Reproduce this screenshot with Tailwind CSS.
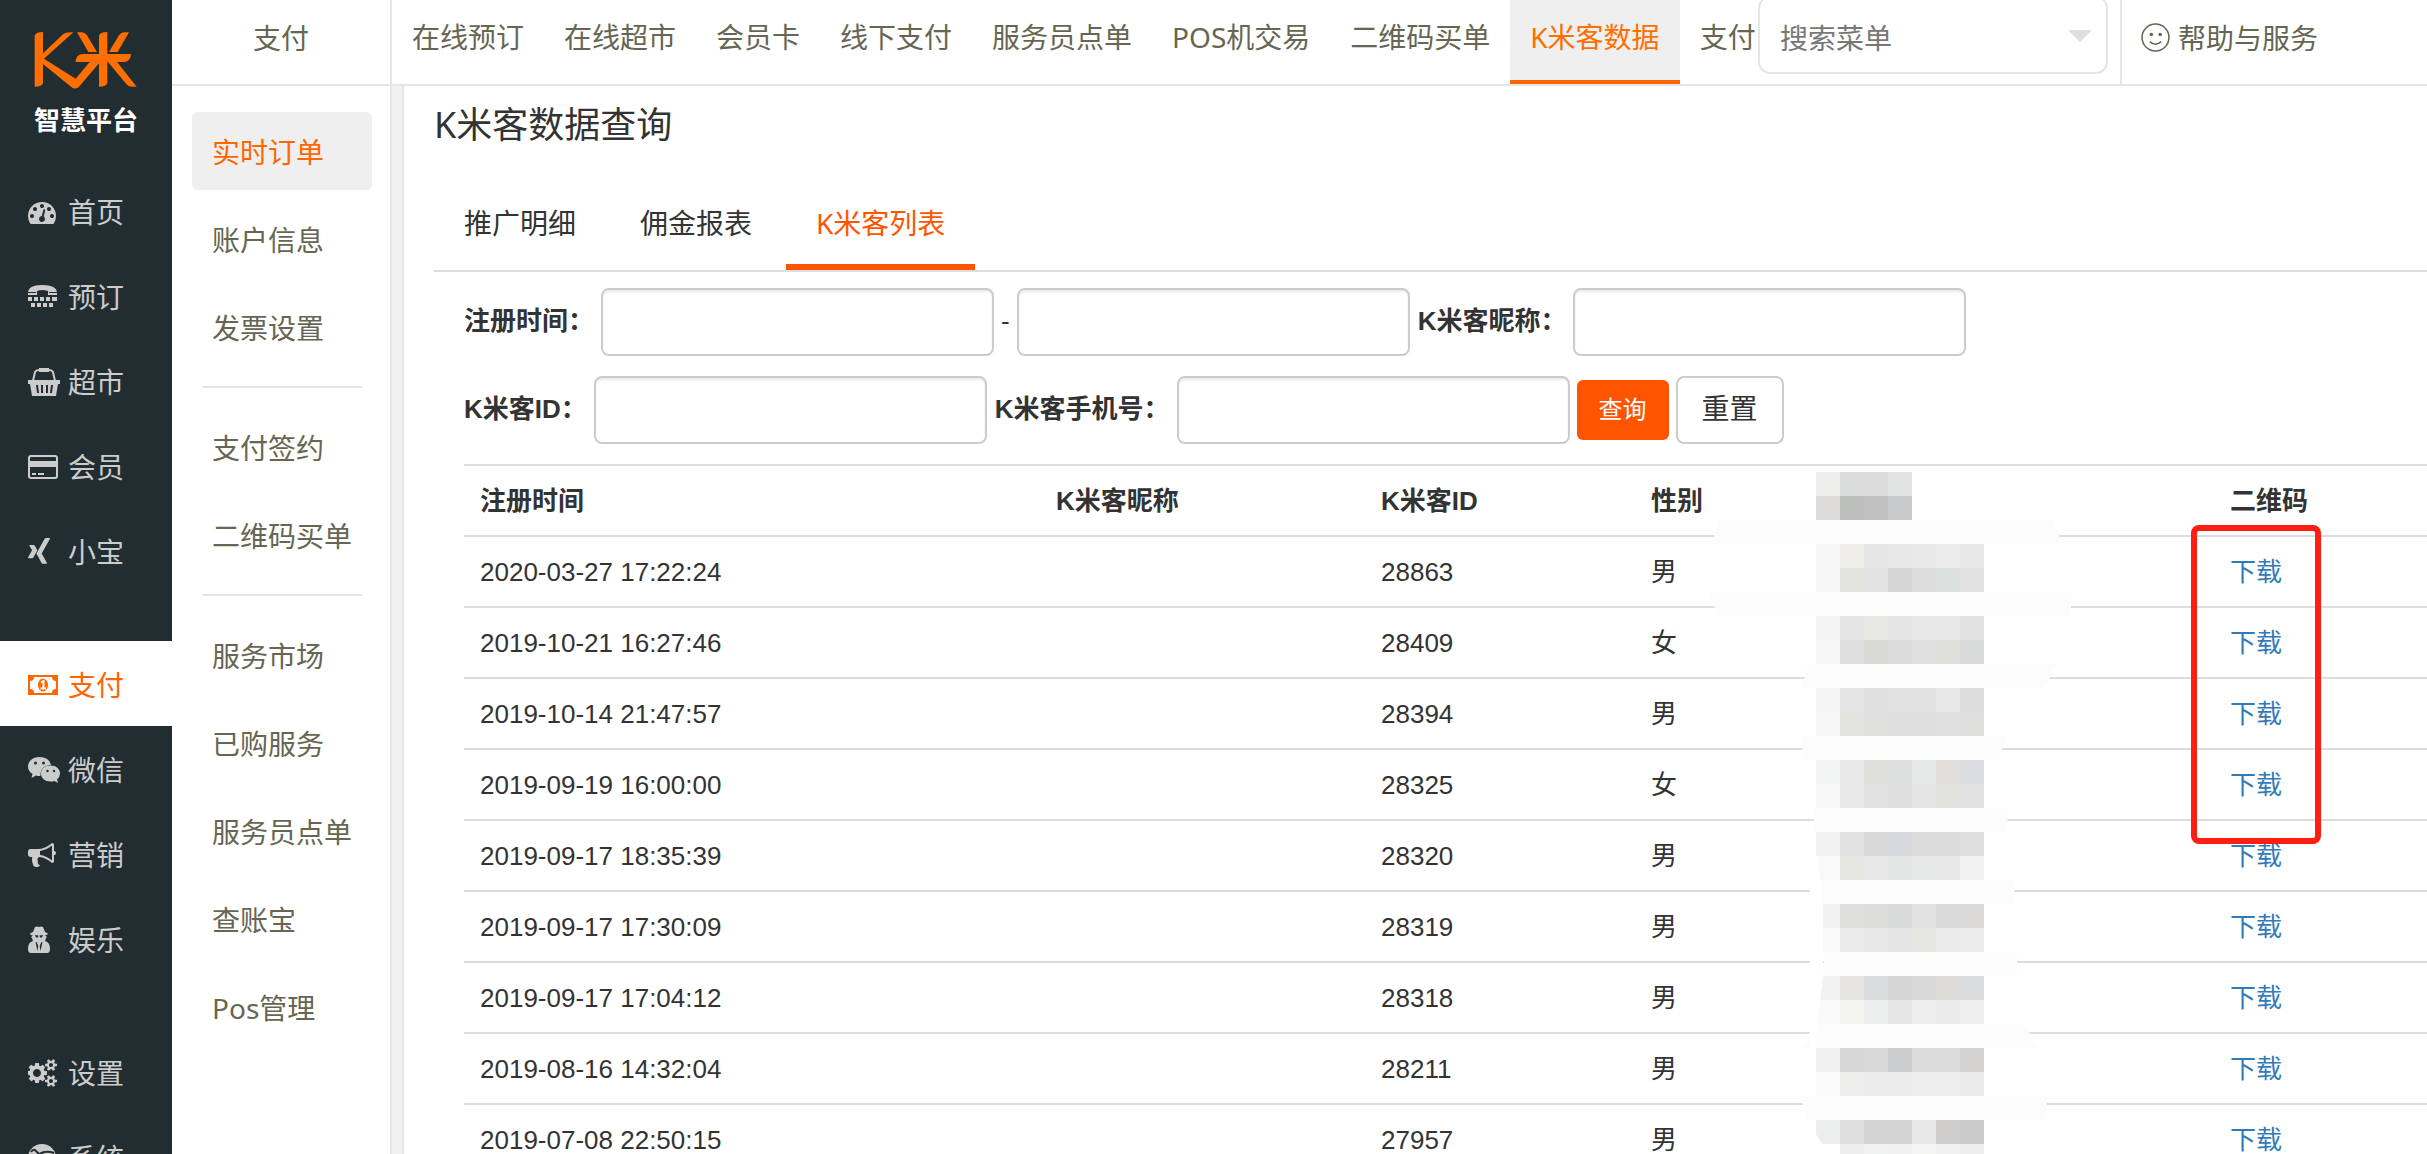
<!DOCTYPE html>
<html lang="zh-CN">
<head>
<meta charset="utf-8">
<title>K米客数据查询</title>
<script src="https://cdn.jsdelivr.net/npm/@tailwindcss/browser@4"></script>
</head>
<body class="flex h-screen overflow-hidden bg-white font-['Noto_Sans','Noto_Sans_CJK_SC',sans-serif] text-[28px] leading-[40px] text-[#333]">

<aside class="flex w-[172px] shrink-0 flex-col bg-[#222d32] text-[#ccc]">
  <a href="#" class="flex h-[168px] shrink-0 flex-col items-center pt-[30px]">
    <svg class="h-[60px] w-[104px]" viewBox="103 90 312 180" fill="#ff6f00" role="img" aria-label="K米">
      <path d="M105 108Q107 96 130 96V160L190 103Q197 96 221 97L133 176L228 236L270 186H228Q229 162 250 162H298V108Q300 96 323 96V162H394Q392 186 372 186H352L411 260H396Q386 260 380 252L323 184V248Q321 260 298 260V190L240 258Q228 272 214 260L130 192V248Q128 260 105 260Z"/>
      <path d="M232 97H246Q256 97 262 106L292 156H266Z"/>
      <path d="M388 97H374Q364 97 358 106L328 156H354Z"/>
    </svg>
    <span class="mt-[6px] text-[26px] leading-[48px] font-bold text-white">智慧平台</span>
  </a>
  <nav class="flex flex-col gap-12">
    <div>
      <a href="#" class="flex h-[85px] items-center pt-[2px] pl-[28px]"><span class="w-[40px]"><svg class="size-[28px]" viewBox="0 0 1792 1792" fill="currentColor"><path d="M384 1152q0-53-37.5-90.5t-90.5-37.5-90.5 37.5-37.5 90.5 37.5 90.5 90.5 37.5 90.5-37.5 37.5-90.5zm192-448q0-53-37.5-90.5t-90.5-37.5-90.5 37.5-37.5 90.5 37.5 90.5 90.5 37.5 90.5-37.5 37.5-90.5zm428 481l101-382q6-26-7.5-48.5t-38.5-29.5-48 6.5-30 39.5l-101 382q-60 5-107 43.5t-63 98.5q-20 77 20 146t117 89 146-20 89-117q16-60-6-117t-72-91zm660-33q0-53-37.5-90.5t-90.5-37.5-90.5 37.5-37.5 90.5 37.5 90.5 90.5 37.5 90.5-37.5 37.5-90.5zm-640-640q0-53-37.5-90.5t-90.5-37.5-90.5 37.5-37.5 90.5 37.5 90.5 90.5 37.5 90.5-37.5 37.5-90.5zm448 192q0-53-37.5-90.5t-90.5-37.5-90.5 37.5-37.5 90.5 37.5 90.5 90.5 37.5 90.5-37.5 37.5-90.5zm320 448q0 261-141 483-19 29-54 29h-1402q-35 0-54-29-141-221-141-483 0-182 71-348t191-286 286-191 348-71 348 71 286 191 191 286 71 348z"/></svg></span>首页</a>
      <a href="#" class="flex h-[85px] items-center pt-[2px] pl-[28px]"><span class="w-[40px]"><svg class="h-[28px] w-[32px]" viewBox="0 0 32 28" fill="currentColor"><path d="M0 10Q0 2 14 2Q29 2 29 10V12H20V8Q14 6 9 8V12H0ZM0 14h4v4h-4zM6 14h4v4h-4zM12 14h4v4h-4zM18 14h4v4h-4zM24 14h5v4h-5zM3 20h4v4h-4zM9 20h4v4h-4zM15 20h4v4h-4zM21 20h4v4h-4z"/><path d="M0 9.500H8M21 9.500H29" stroke="#222d32"/></svg></span>预订</a>
      <a href="#" class="flex h-[85px] items-center pt-[2px] pl-[28px]"><span class="w-[40px]"><svg class="h-[28px] w-[32px]" viewBox="0 0 32 28" fill="currentColor"><path d="M0 12h32v4h-2l-2 12H4L2 16H0Z"/><path d="M5 13L7 4Q8 2 11 2H21Q24 2 25 4L27 13" fill="none" stroke="currentColor" stroke-width="2"/><path d="M11 0h10v4H11z"/><path d="M9 17l1 8M14 17v8M19 17v8M24 17l-1 8" stroke="#222d32" stroke-width="2"/></svg></span>超市</a>
      <a href="#" class="flex h-[85px] items-center pt-[2px] pl-[28px]"><span class="w-[40px]"><svg class="h-[28px] w-[32px]" viewBox="0 0 32 28" fill="currentColor"><rect x="1" y="3" width="28" height="22" rx="2" fill="none" stroke="currentColor" stroke-width="2"/><path d="M1 8h28v6H1zM4 20h4v2h-4zM10 20h6v2h-6z"/></svg></span>会员</a>
      <a href="#" class="flex h-[85px] items-center pt-[2px] pl-[28px]"><span class="w-[40px]"><svg class="size-[28px]" viewBox="190 0 1792 1792" fill="currentColor"><path d="M789 786q-10 18-257 456-27 46-65 46h-239q-21 0-31-17t0-36l253-448q1 0 0-1l-161-279q-12-22-1-37 9-15 32-15h239q40 0 66 45zm806-771q11 16 0 37l-528 934v1l336 615q11 20 1 37-10 15-32 15h-239q-42 0-66-45l-339-622q18-32 531-942 25-45 64-45h241q22 0 31 15z"/></svg></span>小宝</a>
    </div>
    <div>
      <a href="#" aria-current="page" class="flex h-[85px] items-center bg-white pt-[2px] pl-[28px] text-[#ff6600]"><span class="w-[40px]"><svg class="h-[28px] w-[32px]" viewBox="0 0 32 28" fill="currentColor"><path fill-rule="evenodd" d="M0 4h30v20H0zM6 6Q6 10 2 10V18Q6 18 6 22H24Q24 18 28 18V10Q24 10 24 6Z"/><ellipse cx="15" cy="14" rx="5" ry="6.500"/><path d="M13 11.500L15.500 10V17M12.500 17.500H18" fill="none" stroke="#fff" stroke-width="2"/></svg></span>支付</a>
      <a href="#" class="flex h-[85px] items-center pt-[2px] pl-[28px]"><span class="w-[40px]"><svg class="h-[28px] w-[33px]" viewBox="0 0 33 28" fill="currentColor"><path d="M11.500 1C5 1 0 5 0 10.500Q0 15 4.500 18L3.500 22L8 19.500Q10 20 12.500 20C12 13 17 9 23 9Q21 1 11.500 1Z"/><path d="M22.500 9.500C17 9.500 13 13 13 17.500S17 25.500 22.500 25.500Q25 25.500 26.500 25L30 27L29 23.500Q32 21 32 17.500C32 13 28 9.500 22.500 9.500Z"/><g fill="#222d32"><circle cx="7.500" cy="7" r="1.500"/><circle cx="15.500" cy="7" r="1.500"/><circle cx="19.500" cy="15" r="1.200"/><circle cx="26" cy="15" r="1.200"/></g></svg></span>微信</a>
      <a href="#" class="flex h-[85px] items-center pt-[2px] pl-[28px]"><span class="w-[40px]"><svg class="size-[28px]" viewBox="0 0 1792 1792" fill="currentColor"><path d="M1664 640q53 0 90.5 37.5t37.5 90.5-37.5 90.5-90.5 37.5v384q0 52-38 90t-90 38q-417-347-812-380-58 19-91 66t-31 100.500 40 92.500q-20 33-23 65.500t6 58 33.500 55 48 50 61.500 50.500q-29 58-111.500 83t-168.500 11.500-132-55.500q-7-23-29.500-87.500t-32-94.500-23-89-15-101 3.500-98.500 22-110.500h-122q-66 0-113-47t-47-113v-192q0-66 47-113t113-47h480q435 0 896-384 52 0 90 38t38 90v384zm-128 604v-954q-394 302-768 343v270q377 42 768 341z"/></svg></span>营销</a>
      <a href="#" class="flex h-[85px] items-center pt-[2px] pl-[28px]"><span class="w-[40px]"><svg class="h-[28px] w-[24px]" viewBox="0 0 24 28" fill="currentColor"><path d="M7 1Q9 0 11 1Q13 0 15 1L17 6Q20 7 20 8Q18 9 17 9.500L19 11L18 12L17 15Q22 16 22 23Q22 27 19 27H3Q0 27 0 23Q0 16 5 15L4 12L3 11L5 9.500Q2 9 2 8Q2 7 5 6Z"/><path d="M7 9L10.500 9.500L10 11.500H8ZM15 9L11.500 9.500L12 11.500H14ZM7.500 16L9.500 25L10.300 20L8.500 16ZM14.500 16L12.500 25L11.700 20L13.500 16Z" fill="#222d32"/></svg></span>娱乐</a>
    </div>
    <div>
      <a href="#" class="flex h-[85px] items-center pt-[2px] pl-[28px]"><span class="w-[40px]"><svg class="h-[28px] w-[30px]" viewBox="0 0 1920 1792" fill="currentColor"><path d="M832 896q0-106-75-181t-181-75-181 75-75 181 75 181 181 75 181-75 75-181zm768 512q0-52-38-90t-90-38-90 38-38 90q0 53 37.500 90.500t90.500 37.500 90.500-37.500 37.500-90.500zm0-1024q0-52-38-90t-90-38-90 38-38 90q0 53 37.500 90.500t90.500 37.500 90.500-37.500 37.500-90.500zm-384 421v185q0 10-7 19.500t-16 10.500l-155 24q-11 35-32 76 34 48 90 115 7 11 7 20 0 12-7 19-23 30-82.500 89.500t-78.500 59.500q-11 0-21-7l-115-90q-37 19-77 31-11 108-23 155-7 24-30 24h-186q-11 0-20-7.500t-10-17.500l-23-153q-34-10-75-31l-118 89q-7 7-20 7-11 0-21-8-144-133-144-160 0-9 7-19 10-14 41-53t47-61q-23-44-35-82l-152-24q-10-1-17-9.500t-7-19.500v-185q0-10 7-19.500t16-10.500l155-24q11-35 32-76-34-48-90-115-7-11-7-20 0-12 7-20 22-30 82-89t79-59q11 0 21 7l115 90q34-18 77-32 11-108 23-154 7-24 30-24h186q11 0 20 7.500t10 17.500l23 153q34 10 75 31l118-89q8-7 20-7 11 0 21 8 144 133 144 160 0 8-7 19-12 16-42 54t-45 60q23 48 34 82l152 23q10 2 17 10.500t7 19.500zm640 533v140q0 16-149 31-12 27-30 52 51 113 51 138 0 4-4 7-122 71-124 71-8 0-46-47t-52-68q-20 2-30 2t-30-2q-14 21-52 68t-46 47q-2 0-124-71-4-3-4-7 0-25 51-138-18-25-30-52-149-15-149-31v-140q0-16 149-31 13-29 30-52-51-113-51-138 0-4 4-7 4-2 35-20t59-34 30-16q8 0 46 46.500t52 67.500q20-2 30-2t30 2q51-71 92-112l6-2q4 0 124 70 4 3 4 7 0 25-51 138 17 23 30 52 149 15 149 31zm0-1024v140q0 16-149 31-12 27-30 52 51 113 51 138 0 4-4 7-122 71-124 71-8 0-46-47t-52-68q-20 2-30 2t-30-2q-14 21-52 68t-46 47q-2 0-124-71-4-3-4-7 0-25 51-138-18-25-30-52-149-15-149-31v-140q0-16 149-31 13-29 30-52-51-113-51-138 0-4 4-7 4-2 35-20t59-34 30-16q8 0 46 46.500t52 67.500q20-2 30-2t30 2q51-71 92-112l6-2q4 0 124 70 4 3 4 7 0 25-51 138 17 23 30 52 149 15 149 31z"/></svg></span>设置</a>
      <a href="#" class="flex h-[85px] items-center pt-[2px] pl-[28px]"><span class="w-[40px]"><svg class="size-[28px]" viewBox="0 0 28 28" fill="currentColor"><circle cx="14" cy="14" r="14"/><path d="M3 8Q5 5 7 6L11 10Q18 6 26 9M8 14Q14 8 21 13" fill="none" stroke="#222d32" stroke-width="2"/></svg></span>系统</a>
    </div>
  </nav>
</aside>

<aside class="flex w-[220px] shrink-0 flex-col border-r-2 border-[#e5e5e5] text-[#666652]">
  <div class="h-[86px] shrink-0 border-b-2 border-[#e5e5e5] pt-[18px] text-center">支付</div>
  <nav class="flex flex-col pt-[26px] pr-[18px] pl-[20px]">
    <div class="flex flex-col gap-[10px]">
      <a href="#" aria-current="page" class="flex h-[78px] items-center rounded-md bg-[#efefef] pt-[2px] pl-[20px] text-[#ff6600]">实时订单</a>
      <a href="#" class="flex h-[78px] items-center pt-[2px] pl-[20px]">账户信息</a>
      <a href="#" class="flex h-[78px] items-center pt-[2px] pl-[20px]">发票设置</a>
    </div>
    <hr class="mx-[10px] my-[20px] border-t-2 border-[#e5e5e5]">
    <div class="flex flex-col gap-[10px]">
      <a href="#" class="flex h-[78px] items-center pt-[2px] pl-[20px]">支付签约</a>
      <a href="#" class="flex h-[78px] items-center pt-[2px] pl-[20px]">二维码买单</a>
    </div>
    <hr class="mx-[10px] my-[20px] border-t-2 border-[#e5e5e5]">
    <div class="flex flex-col gap-[10px]">
      <a href="#" class="flex h-[78px] items-center pt-[2px] pl-[20px]">服务市场</a>
      <a href="#" class="flex h-[78px] items-center pt-[2px] pl-[20px]">已购服务</a>
      <a href="#" class="flex h-[78px] items-center pt-[2px] pl-[20px]">服务员点单</a>
      <a href="#" class="flex h-[78px] items-center pt-[2px] pl-[20px]">查账宝</a>
      <a href="#" class="flex h-[78px] items-center pt-[2px] pl-[20px]">Pos管理</a>
    </div>
  </nav>
</aside>

<div class="flex min-w-0 flex-1 flex-col">
  <header class="flex h-[86px] shrink-0 border-b-2 border-[#e5e5e5] whitespace-nowrap text-[#666652]">
    <nav class="flex min-w-0 flex-1 overflow-hidden">
      <a href="#" class="px-[20px] pt-[17px]">在线预订</a>
      <a href="#" class="px-[20px] pt-[17px]">在线超市</a>
      <a href="#" class="px-[20px] pt-[17px]">会员卡</a>
      <a href="#" class="px-[20px] pt-[17px]">线下支付</a>
      <a href="#" class="px-[20px] pt-[17px]">服务员点单</a>
      <a href="#" class="px-[20px] pt-[17px]">POS机交易</a>
      <a href="#" class="px-[20px] pt-[17px]">二维码买单</a>
      <a href="#" aria-current="page" class="border-b-4 border-[#ff6600] bg-[#efefef] px-[20px] pt-[17px] text-[#ff6f00]">K米客数据</a>
      <a href="#" class="pt-[17px] pl-[20px]">支付</a>
    </nav>
    <div class="relative -mt-[4px] mr-[12px] h-[78px] w-[350px] shrink-0">
      <input type="text" aria-label="搜索菜单" placeholder="搜索菜单" class="h-full w-full rounded-xl border-2 border-[#e5e5e5] bg-white px-[20px] pt-[6px] text-[28px] placeholder:text-[#777]">
      <svg class="absolute top-[34px] right-[16px] h-[12px] w-[24px]" viewBox="0 0 24 12" fill="#dedede"><path d="M0 0H24L12 12Z"/></svg>
    </div>
    <a href="#" class="flex w-[307px] shrink-0 gap-[8px] border-l-2 border-[#e5e5e5] pt-[18px] pl-[19px]">
      <svg class="mt-[5px] h-[29px] w-[29px]" viewBox="0 0 28 28" fill="none" stroke="currentColor" stroke-width="1.500"><circle cx="14" cy="14" r="13"/><path d="M8.500 18Q14 23 19.500 18"/><g fill="currentColor" stroke="none"><circle cx="10" cy="11" r="1.700"/><circle cx="18.500" cy="11" r="1.700"/></g></svg>
      帮助与服务
    </a>
  </header>

  <div class="flex min-h-0 flex-1">
    <div class="w-[12px] shrink-0 border-r-2 border-[#e5e5e5] bg-[#f0f0f0]"></div>
    <main class="min-w-0 flex-1 overflow-hidden pl-[30px]">
      <h1 class="pt-[13px] text-[36px] leading-[52px]">K米客数据查询</h1>
      <div class="mt-[27px] flex h-[94px] gap-1 border-b-2 border-[#ddd]">
        <a href="#" class="px-[30px] pt-[25px]">推广明细</a>
        <a href="#" class="px-[30px] pt-[25px]">佣金报表</a>
        <a href="#" aria-current="page" class="border-b-6 border-[#ff5500] px-[30px] pt-[25px] text-[#ff5500]">K米客列表</a>
      </div>

      <div class="relative pl-[30px] font-['Liberation_Sans','Noto_Sans_CJK_SC',sans-serif] text-[26px]">
        <form class="flex flex-col gap-[20px] pt-[16px]">
          <div class="flex items-center gap-[7px]">
            <label for="from" class="pb-[2px] font-bold">注册时间：</label>
            <input id="from" type="text" class="h-[68px] w-[393px] rounded-lg border-2 border-[#ccc] px-3 shadow-[inset_0_2px_2px_rgba(0,0,0,0.08)]">
            <span class="pb-[2px]">-</span>
            <input type="text" aria-label="注册时间止" class="h-[68px] w-[393px] rounded-lg border-2 border-[#ccc] px-3 shadow-[inset_0_2px_2px_rgba(0,0,0,0.08)]">
            <label for="nick" class="pb-[2px] pl-px font-bold">K米客昵称：</label>
            <input id="nick" type="text" class="h-[68px] w-[393px] rounded-lg border-2 border-[#ccc] px-3 shadow-[inset_0_2px_2px_rgba(0,0,0,0.08)]">
          </div>
          <div class="flex items-center gap-[7px]">
            <label for="kid" class="pb-[2px] font-bold">K米客ID：</label>
            <input id="kid" type="text" class="h-[68px] w-[393px] rounded-lg border-2 border-[#ccc] px-3 shadow-[inset_0_2px_2px_rgba(0,0,0,0.08)]">
            <label for="phone" class="pb-[2px] pl-px font-bold">K米客手机号：</label>
            <input id="phone" type="text" class="h-[68px] w-[393px] rounded-lg border-2 border-[#ccc] px-3 shadow-[inset_0_2px_2px_rgba(0,0,0,0.08)]">
            <button type="submit" class="h-[60px] w-[92px] rounded-md bg-[#ff5500] text-[24px] text-white">查询</button>
            <button type="reset" class="h-[68px] w-[108px] rounded-lg border-2 border-[#ccc] text-[28px]">重置</button>
          </div>
        </form>

        <table class="mt-[20px] w-full table-fixed border-collapse text-left">
          <colgroup><col class="w-[576px]"><col class="w-[325px]"><col class="w-[270px]"><col class="w-[165px]"><col class="w-[414px]"><col></colgroup>
          <thead>
            <tr class="h-[71px] border-t-2 border-[#ddd]"><th class="pl-[16px]">注册时间</th><th class="pl-[16px]">K米客昵称</th><th class="pl-[16px]">K米客ID</th><th class="pl-[16px]">性别</th><th></th><th class="pl-[16px]">二维码</th></tr>
          </thead>
          <tbody>
            <tr class="h-[71px] border-t-2 border-[#ddd]"><td class="pl-[16px]">2020-03-27 17:22:24</td><td></td><td class="pl-[16px]">28863</td><td class="pl-[16px]">男</td><td></td><td class="pl-[16px]"><a href="#" class="text-[#337ab7]">下载</a></td></tr>
            <tr class="h-[71px] border-t-2 border-[#ddd]"><td class="pl-[16px]">2019-10-21 16:27:46</td><td></td><td class="pl-[16px]">28409</td><td class="pl-[16px]">女</td><td></td><td class="pl-[16px]"><a href="#" class="text-[#337ab7]">下载</a></td></tr>
            <tr class="h-[71px] border-t-2 border-[#ddd]"><td class="pl-[16px]">2019-10-14 21:47:57</td><td></td><td class="pl-[16px]">28394</td><td class="pl-[16px]">男</td><td></td><td class="pl-[16px]"><a href="#" class="text-[#337ab7]">下载</a></td></tr>
            <tr class="h-[71px] border-t-2 border-[#ddd]"><td class="pl-[16px]">2019-09-19 16:00:00</td><td></td><td class="pl-[16px]">28325</td><td class="pl-[16px]">女</td><td></td><td class="pl-[16px]"><a href="#" class="text-[#337ab7]">下载</a></td></tr>
            <tr class="h-[71px] border-t-2 border-[#ddd]"><td class="pl-[16px]">2019-09-17 18:35:39</td><td></td><td class="pl-[16px]">28320</td><td class="pl-[16px]">男</td><td></td><td class="pl-[16px]"><a href="#" class="text-[#337ab7]">下载</a></td></tr>
            <tr class="h-[71px] border-t-2 border-[#ddd]"><td class="pl-[16px]">2019-09-17 17:30:09</td><td></td><td class="pl-[16px]">28319</td><td class="pl-[16px]">男</td><td></td><td class="pl-[16px]"><a href="#" class="text-[#337ab7]">下载</a></td></tr>
            <tr class="h-[71px] border-t-2 border-[#ddd]"><td class="pl-[16px]">2019-09-17 17:04:12</td><td></td><td class="pl-[16px]">28318</td><td class="pl-[16px]">男</td><td></td><td class="pl-[16px]"><a href="#" class="text-[#337ab7]">下载</a></td></tr>
            <tr class="h-[71px] border-t-2 border-[#ddd]"><td class="pl-[16px]">2019-08-16 14:32:04</td><td></td><td class="pl-[16px]">28211</td><td class="pl-[16px]">男</td><td></td><td class="pl-[16px]"><a href="#" class="text-[#337ab7]">下载</a></td></tr>
            <tr class="h-[71px] border-t-2 border-[#ddd]"><td class="pl-[16px]">2019-07-08 22:50:15</td><td></td><td class="pl-[16px]">27957</td><td class="pl-[16px]">男</td><td></td><td class="pl-[16px]"><a href="#" class="text-[#337ab7]">下载</a></td></tr>
          </tbody>
        </table>

        <!-- Pixelated cover over the phone-number column -->
        <svg id="mask" class="pointer-events-none absolute top-[200px] left-[1266px] h-[696px] w-[380px]" viewBox="0 0 380 696" shape-rendering="crispEdges" aria-hidden="true"></svg>
        <!-- Highlight round the download links -->
        <div class="pointer-events-none absolute top-[253px] left-[1757px] h-[319px] w-[130px] rounded-lg border-6 border-[#ff1f12]"></div>
      </div>
    </main>
  </div>
</div>

<script>
const cell = 24, startX = 116;
const blocks = [
  ['eeeeec dadcdb dbdbdb e1e4e2', 'dddcdb bdbfbd c1c1c1 c8c9cb'],
  ['f6f6f6 efeeeb e6e6e6 e7e7e7 e9e9e9 ececec e8e8e8', 'f6f6f6 e3e3e0 e3e3e3 d6d6d6 dddddd dce0de e1e1e1'],
  ['f4f4f4 e5e5e5 e7e7e4 e4e4e4 e7e7e7 e7e7e7 e2e2e2', 'f6f6f6 dfdfdf d9d9d6 dbdbdb e0e0e0 dededb d8dbd9'],
  ['f5f5f5 e5e5e5 e0e0e0 e1e1e1 e2e2e2 e8e8e8 dddddd', 'f7f7f7 e3e3e0 e0e0de dedede dfdfdf e0e0e0 dededc'],
  ['f2f4f3 e9e9e9 dededb dcdfdd e4e8e6 e1dedc dcdde0', 'f8f8f8 e9e9e9 e1e1e1 dedede e4e4e4 e2e2df e2e2e2'],
  ['f2f2f2 e2e2e2 d8d8d9 d8d9dc dcdcdc dcdcdc dedede', 'f9f9f9 e6e6e3 e7e7e7 e2e5e3 e6e9e7 e8e8e8 f2f2f2'],
  ['f2f2f2 dededc dddddb d8dbd9 e1e1e1 dadada dbdad8', 'f9f9f9 ebebeb e8e8e8 e5e5e5 e6e6e3 ebebeb ececec'],
  ['f2f2f2 e6e4e2 dadcde d5d5d5 d9d9d9 dcdbd8 dbdcde', 'fafafa f3f3f0 ebeeec e6e6e6 ededed ebebeb efefef'],
  ['f0f0f0 d7d7d7 d8d8d8 cbcdcf dbdbdb dbdbdb d4d2d0', 'fbfbfb eeeeec ececec ececec eeeeee eeeeee ebebeb'],
  ['ecefed dedede d4d4d4 d4d4d4 e7e7e7 d0cecc cbcbcb', 'ffffff eeeeee f1f3f2 f1f1f1 f5f5f3 f1f1f1 eeeeee']
];
// Left and right ends, top then bottom, of the pale strips between blocks
const strips = [
  [20, 353, 11, 362], [9, 372, 18, 371], [108, 357, 102, 344], [102, 307, 104, 298],
  [113, 308, 115, 307], [119, 314, 123, 315], [124, 317, 123, 317], [114, 324, 102, 338], [100, 348, 108, 344]
];
let out = '';
blocks.forEach((rows, i) => rows.forEach((row, j) => row.split(' ').forEach((c, k) => {
  out += `<rect x="${startX + k * cell}" y="${i * 72 + j * cell}" width="${cell}" height="${cell}" fill="#${c}"/>`;
})));
strips.forEach(([a, b, c, d], i) => {
  const y = 48 + i * 72;
  out += `<polygon points="${a},${y} ${b},${y} ${d},${y + 24} ${c},${y + 24}" fill="#fcfcfc"/>`;
});
// Irregular left edge of the cover
out += '<path d="M115 576L123 504V432L118 384H110V576ZM116 662L137 696H110V662Z" fill="#fff"/>';
document.getElementById('mask').innerHTML = out;
</script>
</body>
</html>
